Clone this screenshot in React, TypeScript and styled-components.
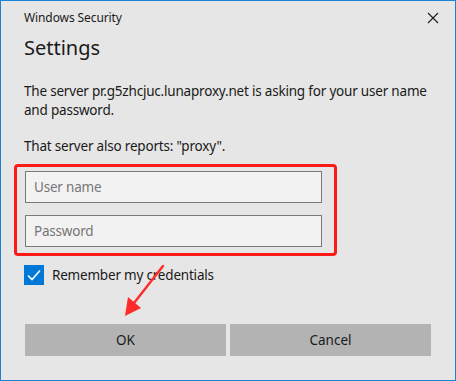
import styled, { createGlobalStyle } from 'styled-components';

const GlobalStyle = createGlobalStyle`
  html, body {
    margin: 0;
    padding: 0;
    background: #e6e6e6;
  }
  body {
    font-family: 'Noto Sans', 'Open Sans', sans-serif;
    color: #1a1a1a;
  }
`;

const Dialog = styled.div`
  position: relative;
  box-sizing: border-box;
  width: 456px;
  height: 381px;
  background: #e6e6e6;
  border: 1px solid #1883d7;
  padding: 0 24px 0 23px;
`;

const TitleBar = styled.div`
  display: flex;
  justify-content: space-between;
  align-items: center;
  height: 33px;
  font-size: 12px;
  letter-spacing: -0.1px;
  color: #1a1a1a;
`;

const CloseBtn = styled.div`
  display: flex;
  align-items: center;
  justify-content: center;
  width: 24px;
  height: 24px;
  margin-right: -14px;
`;

const Heading = styled.h1`
  margin: 0;
  font-size: 20px;
  font-weight: 400;
  line-height: 28px;
  color: #1a1a1a;
`;

const Message = styled.p<{ gap?: number }>`
  margin: ${(p) => p.gap ?? 0}px 0 0;
  font-size: 13.5px;
  letter-spacing: -0.2px;
  line-height: 19px;
  color: #1a1a1a;
`;

const Highlight = styled.div`
  box-sizing: border-box;
  margin: 8px 0 0 -10px;
  width: 323px;
  height: 92px;
  border: 3px solid #ff1a1a;
  border-radius: 4px;
  padding: 4px 0 0 8px;
  display: flex;
  flex-direction: column;
  gap: 12px;
`;

const Field = styled.input`
  box-sizing: border-box;
  width: 297px;
  height: 32px;
  border: 1px solid #7a7a7a;
  background: #f2f2f2;
  padding: 0 8px;
  font-family: inherit;
  font-size: 13.5px;
  letter-spacing: -0.2px;
  color: #1a1a1a;
  outline: none;
  &::placeholder {
    color: #767676;
  }
`;

const CheckRow = styled.label`
  display: flex;
  align-items: center;
  gap: 8px;
  height: 20px;
  margin-top: 9px;
  font-size: 13.5px;
  letter-spacing: -0.2px;
  color: #1a1a1a;
`;

const CheckBox = styled.span`
  display: flex;
  align-items: center;
  justify-content: center;
  width: 20px;
  height: 20px;
  background: #0078d7;
`;

const Buttons = styled.div`
  display: grid;
  grid-template-columns: 1fr 1fr;
  gap: 4px;
  margin-top: 39px;
  margin-left: 1px;
`;

const Button = styled.button`
  height: 32px;
  border: none;
  background: #b3b3b3;
  font-family: inherit;
  font-size: 13.5px;
  color: #1a1a1a;
`;

const Arrow = styled.svg`
  position: absolute;
  left: 118px;
  top: 262px;
`;

export default function App() {
  return (
    <>
      <GlobalStyle />
      <Dialog>
        <TitleBar>
          <span>Windows Security</span>
          <CloseBtn>
            <svg width="12" height="12" viewBox="0 0 12 12">
              <path d="M1 1L11 11M11 1L1 11" stroke="#1a1a1a" strokeWidth="1.1" />
            </svg>
          </CloseBtn>
        </TitleBar>
        <Heading>Settings</Heading>
        <Message gap={20}>
          The server pr.g5zhcjuc.lunaproxy.net is asking for your user name and password.
        </Message>
        <Message gap={17}>That server also reports: "proxy".</Message>
        <Highlight>
          <Field placeholder="User name" />
          <Field placeholder="Password" type="password" />
        </Highlight>
        <CheckRow>
          <CheckBox>
            <svg width="14" height="12" viewBox="0 0 14 12">
              <path d="M1 6.5L5 10.5L13 1.5" fill="none" stroke="#fff" strokeWidth="1.6" />
            </svg>
          </CheckBox>
          Remember my credentials
        </CheckRow>
        <Buttons>
          <Button>OK</Button>
          <Button>Cancel</Button>
        </Buttons>
        <Arrow width="50" height="58" viewBox="0 0 50 58">
          <path d="M44 3L15 40" stroke="#ff2a2a" strokeWidth="2.4" strokeLinecap="round" />
          <path d="M6 53L9 34L22 45Z" fill="#ff2a2a" />
        </Arrow>
      </Dialog>
    </>
  );
}
